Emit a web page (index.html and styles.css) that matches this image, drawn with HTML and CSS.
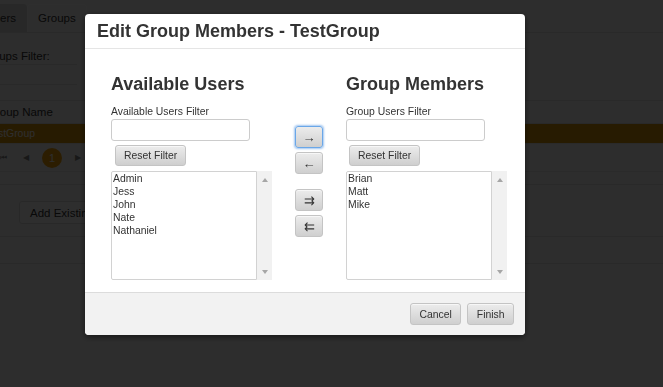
FILE: index.html
```html
<!DOCTYPE html>
<html lang="en">
<head>
    <meta charset="UTF-8">
    <meta name="viewport" content="width=device-width, initial-scale=1.0">
    <title>Edit Group Members</title>
    <link rel="stylesheet" href="styles.css">
</head>
<body>
    <!-- Page behind the dialog -->
    <div class="page">
        <div class="tabs">
            <span class="tab active">Users</span>
            <span class="tab">Groups</span>
        </div>

        <div class="groups">
            <div class="filter-label">Groups Filter:</div>
            <div class="filter-input"></div>

            <div class="grid">
                <div class="grid-head">Group Name</div>
                <div class="grid-row selected">TestGroup</div>
                <div class="pager">
                    <span class="pg">&#9198;</span>
                    <span class="pg">&#9664;</span>
                    <span class="pg current">1</span>
                    <span class="pg">&#9654;</span>
                </div>
            </div>

            <div class="actions">
                <button class="page-btn">Add Existing User</button>
            </div>
            <div class="panel"></div>
        </div>
    </div>

    <div class="overlay"></div>

    <!-- Dialog -->
    <div class="modal">
        <div class="modal-header">
            <h1>Edit Group Members - TestGroup</h1>
        </div>

        <div class="modal-body">
            <div class="column">
                <h2>Available Users</h2>
                <label class="field-label">Available Users Filter</label>
                <input class="filter" type="text">
                <button class="btn reset">Reset Filter</button>
                <div class="listbox">
                    <div class="list">
                        <div>Admin</div>
                        <div>Jess</div>
                        <div>John</div>
                        <div>Nate</div>
                        <div>Nathaniel</div>
                    </div>
                    <div class="scroll"><span class="up"></span><span class="down"></span></div>
                </div>
            </div>

            <div class="mover">
                <button class="btn move focus">&rarr;</button>
                <button class="btn move">&larr;</button>
                <button class="btn move all">&#8649;</button>
                <button class="btn move">&#8647;</button>
            </div>

            <div class="column">
                <h2>Group Members</h2>
                <label class="field-label">Group Users Filter</label>
                <input class="filter" type="text">
                <button class="btn reset right">Reset Filter</button>
                <div class="listbox">
                    <div class="list">
                        <div>Brian</div>
                        <div>Matt</div>
                        <div>Mike</div>
                    </div>
                    <div class="scroll"><span class="up"></span><span class="down"></span></div>
                </div>
            </div>
        </div>

        <div class="modal-footer">
            <button class="btn">Cancel</button>
            <button class="btn">Finish</button>
        </div>
    </div>
</body>
</html>
```

FILE: styles.css
```css
body {
    margin: 0;
    padding: 0;
    font-family: "Liberation Sans", Arial, sans-serif;
    font-size: 10.4px;
    color: #333;
    background: #f7f7f7;
    height: 387px;
    overflow: hidden;
}

/* Background page */
.page {
    margin-left: -15px;
}

.tabs {
    display: flex;
    margin-left: -10px;
    padding-top: 4px;
    border-bottom: 1px solid #e2e2e2;
    height: 28px;
}

.tab {
    padding: 0 10px;
    line-height: 26px;
    border: 1px solid #fff;
    border-bottom: none;
    border-radius: 4px 4px 0 0;
    font-size: 11.5px;
}

.tab.active {
    background: #dcdcdc;
    border-color: #dcdcdc;
}

.groups {
    padding-left: 2px;
}

.filter-label {
    margin-left: -7px;
    font-size: 11.5px;
    line-height: 14px;
    padding-top: 16px;
    height: 15px;
}

.filter-input {
    width: 90px;
    height: 19px;
    border-top: 1px solid #e0e0e0;
    border-bottom: 1px solid #e0e0e0;
}

.grid {
    margin-top: 15px;
    border-top: 1px solid #e0e0e0;
    border-bottom: 1px solid #e0e0e0;
    height: 83px;
}

.grid-head {
    font-size: 11.5px;
    line-height: 22px;
    height: 22px;
    border-bottom: 1px solid #e0e0e0;
}

.grid-row {
    line-height: 19px;
    height: 19px;
}

.grid-row.selected {
    background: #d89409;
    color: #fff;
}

.pager {
    display: flex;
    align-items: center;
    gap: 9px;
    height: 27px;
    background: #fafafa;
    border-top: 1px solid #e6e6e6;
    border-bottom: 1px solid #e6e6e6;
    padding-left: 9px;
    color: #888;
    font-size: 8px;
}

.pg {
    width: 14px;
    text-align: center;
}

.pg.current {
    width: 20px;
    height: 20px;
    line-height: 20px;
    border-radius: 50%;
    background: #f0a30a;
    color: #fff;
    font-size: 11px;
}

.actions {
    padding: 16px 0 12px 32px;
    border-bottom: 1px solid #e0e0e0;
}

.page-btn {
    font-family: inherit;
    font-size: 11.5px;
    height: 23px;
    padding: 0 10px;
    background: #fff;
    border: 1px solid #ddd;
    border-radius: 3px;
    color: #333;
}

.panel {
    height: 26px;
    border-bottom: 1px solid #e0e0e0;
}

.overlay {
    position: fixed;
    top: 0;
    left: 0;
    right: 0;
    bottom: 0;
    background: rgba(0, 0, 0, 0.82);
}

/* Dialog */
.modal {
    position: fixed;
    top: 14px;
    left: 85px;
    width: 440px;
    background: #fff;
    border-radius: 4px;
    box-shadow: 0 2px 6px rgba(0, 0, 0, 0.5);
    overflow: hidden;
}

.modal-header {
    padding: 7px 12px;
    border-bottom: 1px solid #e5e5e5;
}

.modal-header h1 {
    margin: 0;
    font-size: 18px;
    line-height: 20px;
    font-weight: bold;
    color: #333;
}

.modal-body {
    display: flex;
    gap: 22px;
    padding: 25px 16px 12px 26px;
}

.column {
    display: flex;
    flex-direction: column;
    align-items: flex-start;
    width: 161px;
    flex-shrink: 0;
}

.column h2 {
    margin: 0 0 11px;
    font-size: 18px;
    line-height: 20px;
    font-weight: bold;
    color: #333;
}

.field-label {
    line-height: 13px;
}

.filter {
    box-sizing: border-box;
    width: 139px;
    height: 22px;
    margin: 1px 0 0;
    border: 1px solid #ccc;
    border-radius: 3px;
    padding: 2px 4px;
}

.btn {
    font-family: inherit;
    font-size: 10.4px;
    color: #333;
    height: 22px;
    padding: 0 8.5px;
    background: linear-gradient(#ececec, #cfcfcf);
    border: 1px solid #c4c4c4;
    border-radius: 3px;
    box-shadow: inset 0 1px 0 rgba(255, 255, 255, 0.6);
}

.reset {
    height: 21px;
    padding: 0 8px;
    margin: 4px 0 0 4px;
}

.reset.right {
    margin-left: 3px;
}

.listbox {
    display: flex;
    margin-top: 5px;
    height: 109px;
    width: 161px;
}

.list {
    flex: 1;
    border: 1px solid #d2d2d2;
    border-radius: 2px 0 0 2px;
    padding: 0 1px;
    line-height: 13px;
}

.scroll {
    width: 15px;
    background: #f1f1f1;
    display: flex;
    flex-direction: column;
    justify-content: space-between;
    align-items: center;
    padding: 7px 0 6px;
    box-sizing: border-box;
}

.up {
    border-left: 3px solid transparent;
    border-right: 3px solid transparent;
    border-bottom: 4px solid #a6a6a6;
}

.down {
    border-left: 3px solid transparent;
    border-right: 3px solid transparent;
    border-top: 4px solid #a6a6a6;
}

.mover {
    display: flex;
    flex-direction: column;
    align-items: center;
    width: 30px;
    flex-shrink: 0;
    padding-top: 52px;
}

.move {
    width: 28px;
    height: 22px;
    padding: 0;
    margin-bottom: 4px;
    font-size: 13px;
    line-height: 1;
}

.move.focus {
    border-color: #6aa7e8;
    box-shadow: 0 0 2px 1px rgba(100, 160, 230, 0.6);
}

.move.all {
    margin-top: 11px;
}

.modal-footer {
    display: flex;
    justify-content: flex-end;
    gap: 6px;
    padding: 10px 11px 10px;
    background: #f2f2f2;
    border-top: 1px solid #dcdcdc;
}
```
